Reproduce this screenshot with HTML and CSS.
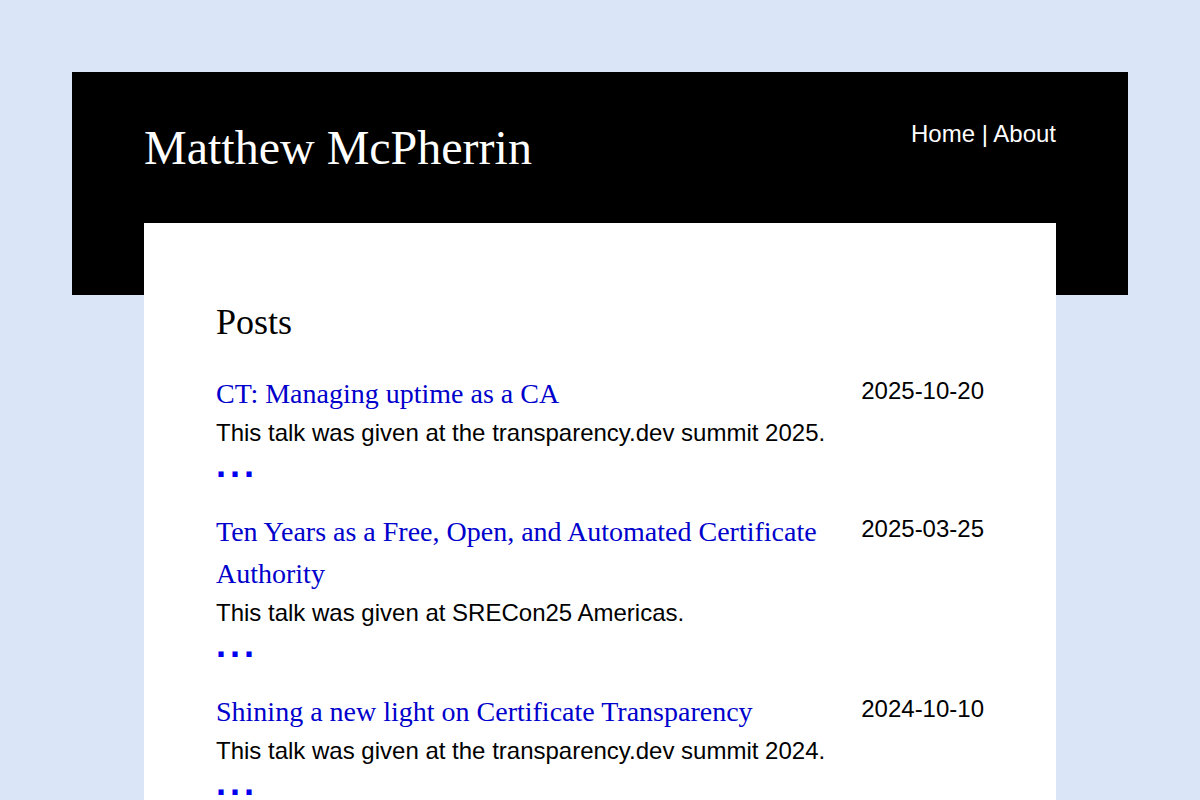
FILE: index.html
```html
<!DOCTYPE html>
<html lang="en">
<head>
<meta charset="utf-8">
<title>Matthew McPherrin</title>
<link rel="stylesheet" href="styles.css">
</head>
<body>
<header class="site-header">
  <h1 class="site-title">Matthew McPherrin</h1>
  <nav class="site-nav"><a href="#">Home</a> | <a href="#">About</a></nav>
</header>
<main class="content">
  <h2 class="section-title">Posts</h2>
  <article class="post">
    <div class="post-body">
      <a class="post-title" href="#">CT: Managing uptime as a CA</a>
      <p class="post-summary">This talk was given at the transparency.dev summit 2025.</p>
      <div class="more"><a href="#">...</a></div>
    </div>
    <div class="post-date">2025-10-20</div>
  </article>
  <article class="post">
    <div class="post-body">
      <a class="post-title" href="#">Ten Years as a Free, Open, and Automated Certificate Authority</a>
      <p class="post-summary">This talk was given at SRECon25 Americas.</p>
      <div class="more"><a href="#">...</a></div>
    </div>
    <div class="post-date">2025-03-25</div>
  </article>
  <article class="post">
    <div class="post-body">
      <a class="post-title" href="#">Shining a new light on Certificate Transparency</a>
      <p class="post-summary">This talk was given at the transparency.dev summit 2024.</p>
      <div class="more"><a href="#">...</a></div>
    </div>
    <div class="post-date">2024-10-10</div>
  </article>
</main>
</body>
</html>
```
FILE: styles.css
```css
html {
  background: #dae6f8;
}
body {
  margin: 72px;
  font-family: "Liberation Sans", Arial, sans-serif;
  font-size: 24px;
  line-height: 1.5;
  color: #000;
}
a {
  color: #0000cc;
  text-decoration: none;
}
.site-header {
  background: #000;
  color: #fff;
  height: 223px;
  box-sizing: border-box;
  padding: 40px 72px 0;
  display: flex;
  justify-content: space-between;
  align-items: flex-start;
}
.site-title {
  margin: 0;
  font-family: "Liberation Serif", "Times New Roman", serif;
  font-weight: normal;
  font-size: 48px;
  line-height: 72px;
}
.site-nav {
  padding-top: 4px;
  line-height: 36px;
}
.site-nav a {
  color: #fff;
}
.content {
  background: #fff;
  margin: -72px 72px 0;
  padding: 72px;
  min-height: 600px;
}
.section-title {
  margin: 0 0 24px;
  font-family: "Liberation Serif", "Times New Roman", serif;
  font-weight: normal;
  font-size: 36px;
  line-height: 54px;
}
.post {
  display: flex;
  justify-content: space-between;
  align-items: flex-start;
  gap: 24px;
  margin-bottom: 24px;
}
.post-body {
  flex: 1;
}
.post-title {
  display: block;
  font-family: "Liberation Serif", "Times New Roman", serif;
  font-size: 28px;
  line-height: 42px;
}
.post-summary {
  margin: 0;
  line-height: 36px;
}
.more {
  line-height: 36px;
}
.more a {
  color: #0000ee;
  font-size: 36px;
  font-weight: bold;
  letter-spacing: 4px;
  line-height: 0;
}
.post-date {
  line-height: 36px;
  white-space: nowrap;
}
```
